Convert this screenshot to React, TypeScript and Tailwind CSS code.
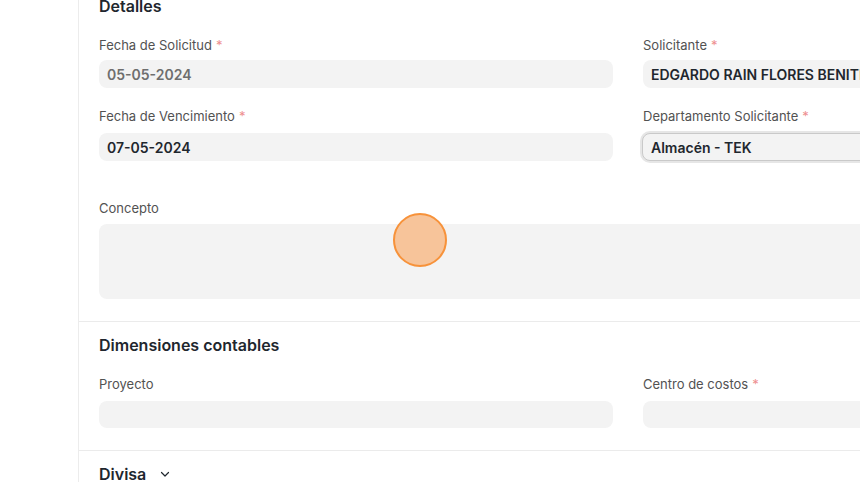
import React from "react";

function Label({ text, req }: { text: string; req?: boolean }) {
  return (
    <div className="h-[20px] text-[13px] leading-[20px] text-[#525252]">
      {text}
      {req && <span className="ml-[4px] text-[#ee8f8f]">*</span>}
    </div>
  );
}

export default function App() {
  return (
    <div
      className="relative w-[860px] h-[482px] overflow-hidden bg-white"
      style={{ fontFamily: "Inter, 'Noto Sans', sans-serif" }}
    >
      <div className="flex h-full">
        <div className="w-[79px] shrink-0 border-r border-[#ececec]" />
        <div className="flex flex-col w-[1100px] shrink-0">
          {/* Detalles */}
          <div className="px-[20px] mt-[-6px]">
            <div className="h-[24px] text-[16px] leading-[24px] font-semibold text-[#1f272e]">Detalles</div>
            <div className="grid grid-cols-[514px_514px] gap-x-[30px] mt-[17px]">
              <div className="flex flex-col">
                <Label text="Fecha de Solicitud" req />
                <div className="mt-[5px] h-[28px] rounded-[8px] bg-[#f3f3f3] px-[8px] flex items-center text-[14px] font-semibold text-[#6e6e6e]">
                  05-05-2024
                </div>
                <div className="mt-[18px]">
                  <Label text="Fecha de Vencimiento" req />
                </div>
                <div className="mt-[7px] h-[28px] rounded-[8px] bg-[#f3f3f3] px-[8px] flex items-center text-[14px] font-semibold text-[#1f272e]">
                  07-05-2024
                </div>
              </div>
              <div className="flex flex-col">
                <Label text="Solicitante" req />
                <div className="mt-[5px] h-[28px] rounded-[8px] bg-[#f3f3f3] px-[8px] flex items-center text-[14px] font-semibold text-[#1f272e] whitespace-nowrap">
                  EDGARDO RAIN FLORES BENITEZ
                </div>
                <div className="mt-[18px]">
                  <Label text="Departamento Solicitante" req />
                </div>
                <div className="mt-[7px] h-[28px] rounded-[8px] bg-[#f3f3f3] px-[8px] flex items-center text-[14px] font-semibold text-[#1f272e] border border-[#c9c9c9] shadow-[0_0_0_2px_#e6e6e6] -mx-[1px]">
                  Almacén - TEK
                </div>
              </div>
            </div>
            <div className="mt-[37px]">
              <Label text="Concepto" />
            </div>
            <div className="mt-[6px] h-[75px] rounded-[8px] bg-[#f3f3f3]" />
          </div>
          <div className="mt-[22px] border-t border-[#ebebeb]" />
          {/* Dimensiones */}
          <div className="px-[20px]">
            <div className="mt-[11px] h-[24px] text-[16px] leading-[24px] font-semibold text-[#1f272e]">Dimensiones contables</div>
            <div className="grid grid-cols-[514px_514px] gap-x-[30px] mt-[17px]">
              <div className="flex flex-col">
                <Label text="Proyecto" />
                <div className="mt-[7px] h-[27px] rounded-[8px] bg-[#f3f3f3]" />
              </div>
              <div className="flex flex-col">
                <Label text="Centro de costos" req />
                <div className="mt-[7px] h-[27px] rounded-[8px] bg-[#f3f3f3]" />
              </div>
            </div>
          </div>
          <div className="mt-[22px] border-t border-[#ebebeb]" />
          <div className="px-[20px]">
            <div className="mt-[11px] h-[24px] flex items-center gap-[13px] text-[16px] font-semibold text-[#1f272e]">
              <span>Divisa</span>
              <svg width="12" height="12" viewBox="0 0 12 12" fill="none" stroke="#1f272e" strokeWidth="1.2" strokeLinecap="round" strokeLinejoin="round">
                <path d="M2.5 4.5 6 8 9.5 4.5" />
              </svg>
            </div>
          </div>
        </div>
      </div>
      <div className="absolute left-[393px] top-[213px] w-[54px] h-[54px] rounded-full bg-[#f7c49a] border-2 border-[#f7923a]" />
    </div>
  );
}
